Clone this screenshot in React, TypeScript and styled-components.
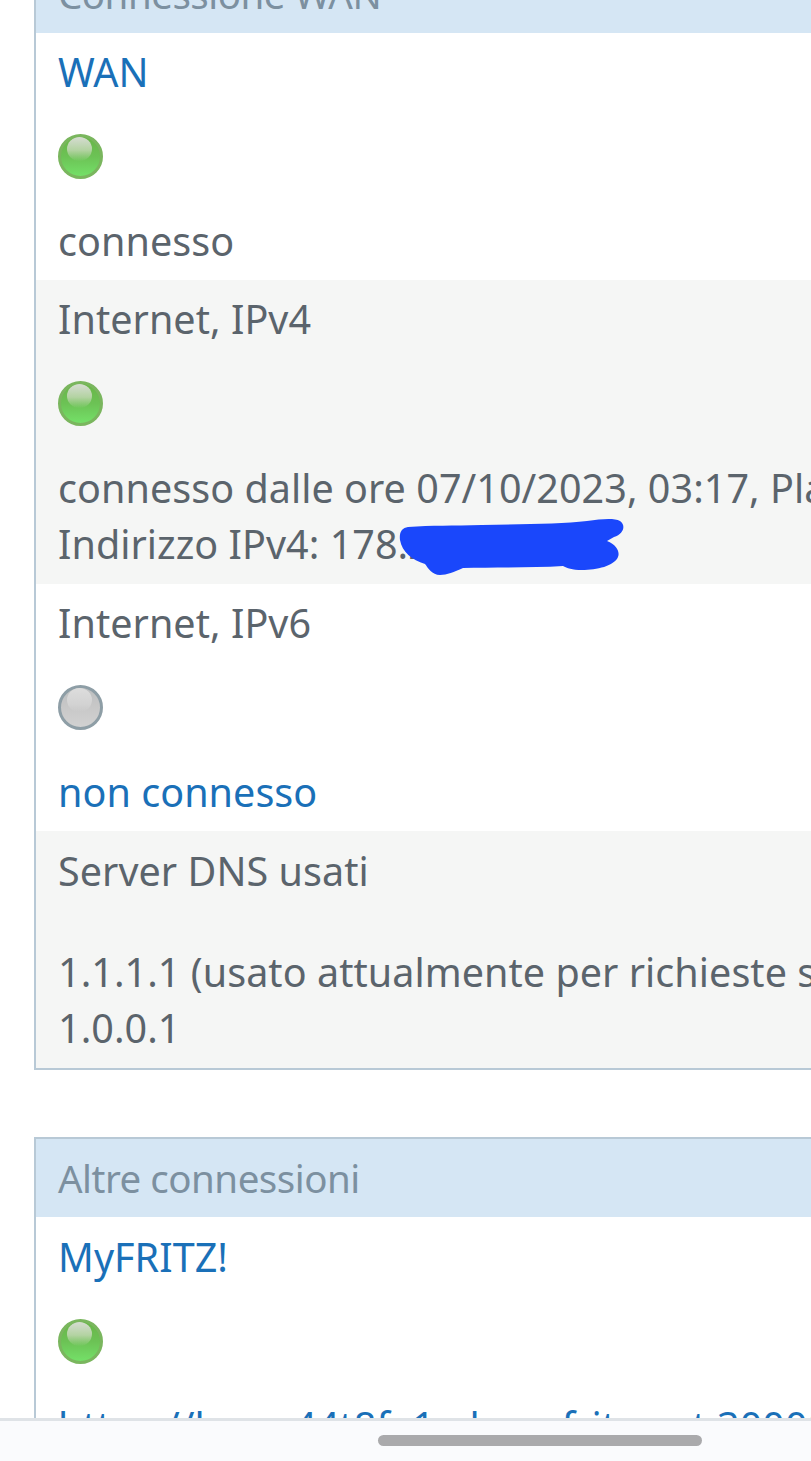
import React from "react";
import styled, { createGlobalStyle } from "styled-components";

const Global = createGlobalStyle`
  html, body { margin: 0; padding: 0; background: #fff; }
  body { font-family: "Noto Sans", "Open Sans", sans-serif; }
`;

const Screen = styled.div`
  width: 811px;
  height: 1461px;
  display: flex;
  flex-direction: column;
  overflow: hidden;
  background: #fff;
`;

const Viewport = styled.main`
  flex: 1;
  min-height: 0;
  overflow: hidden;
  padding-left: 34px;
  margin-top: -47px;
  font-size: 39.5px;
  line-height: 56px;
  letter-spacing: 0.05px;
  color: #5b646c;
`;

const Panel = styled.section<{ $gap?: number }>`
  width: 1000px;
  margin-top: ${(p) => p.$gap ?? 0}px;
  border: 2px solid #b8c9d6;
  border-right: none;
  background: #fff;
  white-space: nowrap;
`;

const PanelHeader = styled.h2`
  margin: 0;
  height: 78px;
  padding: 11px 0 0 22px;
  box-sizing: border-box;
  font-size: 38.5px;
  font-weight: 400;
  line-height: 56px;
  letter-spacing: -0.5px;
  color: #7c90a0;
  background: #d5e6f4;
`;

const Row = styled.div<{ $alt?: boolean; $top?: number; $bottom?: number }>`
  position: relative;
  padding: ${(p) => p.$top ?? 11}px 0 ${(p) => p.$bottom ?? 11}px 22px;
  background: ${(p) => (p.$alt ? "#f5f6f5" : "#fff")};
`;

const Label = styled.div<{ $link?: boolean }>`
  height: 56px;
  color: ${(p) => (p.$link ? "#1a70b8" : "inherit")};
`;

const Led = styled.div<{ $on: boolean }>`
  position: relative;
  width: 45px;
  height: 45px;
  margin: 34px 0;
  box-sizing: border-box;
  border-radius: 50%;
  filter: blur(0.6px);
  border: 3px solid ${(p) => (p.$on ? "#7ab65e" : "#8e9ea6")};
  background: ${(p) =>
    p.$on
      ? "linear-gradient(180deg, #69b548 0%, #6cc255 50%, #74e068 100%)"
      : "linear-gradient(180deg, #bdbfc0 0%, #c8c8c8 50%, #d2d2d2 100%)"};

  &::after {
    content: "";
    position: absolute;
    left: 6px;
    top: 0;
    width: 25px;
    height: 24px;
    border-radius: 50%;
    background: ${(p) =>
      p.$on
        ? "linear-gradient(180deg, #d6dcd2 0%, #b3d3a2 55%, rgba(120, 205, 100, 0.1) 100%)"
        : "linear-gradient(180deg, #dddddd 0%, #d2d2d2 70%, rgba(200, 200, 200, 0.2) 100%)"};
  }
`;

const Value = styled.div<{ $link?: boolean }>`
  color: ${(p) => (p.$link ? "#1a70b8" : "inherit")};
`;

const ValueSpaced = styled(Value)`
  margin-top: 45px;
`;

const Scribble = styled.svg`
  position: absolute;
  left: 356px;
  top: 230px;
  width: 240px;
  height: 70px;
`;

const BottomBar = styled.footer`
  flex: none;
  height: 43px;
  box-sizing: border-box;
  border-top: 3px solid #dfe3e7;
  background: #fafbfd;
  padding: 14px 109px 0 378px;
  position: relative;
  z-index: 1;
`;

const ScrollThumb = styled.div`
  height: 11px;
  border-radius: 6px;
  background: #aaaaac;
`;

export default function App() {
  return (
    <Screen>
      <Global />
      <Viewport>
        <Panel>
          <PanelHeader>Connessione WAN</PanelHeader>
          <Row>
            <Label $link>WAN</Label>
            <Led $on />
            <Value>connesso</Value>
          </Row>
          <Row $alt $bottom={12}>
            <Label>Internet, IPv4</Label>
            <Led $on />
            <Value>connesso dalle ore 07/10/2023, 03:17, Platform</Value>
            <Value>Indirizzo IPv4: 178.2</Value>
            <Scribble viewBox="0 0 240 70" aria-hidden="true">
              <path
                d="M16 17 C40 15 60 16 90 15 C130 14 170 14 195 11 C210 9 222 8 228 11 C234 15 232 24 222 27 L215 31 C225 35 228 42 226 47 C222 56 205 60 190 60 C180 60 175 58 171 56 C140 58 100 57 71 58 C62 62 55 65 48 65 C40 65 36 58 33 54 C20 50 10 42 8 30 C7 22 10 18 16 17 Z"
                fill="#1a47fb"
              />
            </Scribble>
          </Row>
          <Row>
            <Label>Internet, IPv6</Label>
            <Led $on={false} />
            <Value $link>non connesso</Value>
          </Row>
          <Row $alt $top={12} $bottom={12}>
            <Label>Server DNS usati</Label>
            <ValueSpaced>1.1.1.1 (usato attualmente per richieste standard)</ValueSpaced>
            <Value>1.0.0.1</Value>
          </Row>
        </Panel>
        <Panel $gap={67}>
          <PanelHeader>Altre connessioni</PanelHeader>
          <Row $top={12}>
            <Label $link>MyFRITZ!</Label>
            <Led $on />
            <Value $link>https://leeee44t8fa1.ob.myfritz.net:30000</Value>
          </Row>
        </Panel>
      </Viewport>
      <BottomBar>
        <ScrollThumb />
      </BottomBar>
    </Screen>
  );
}
